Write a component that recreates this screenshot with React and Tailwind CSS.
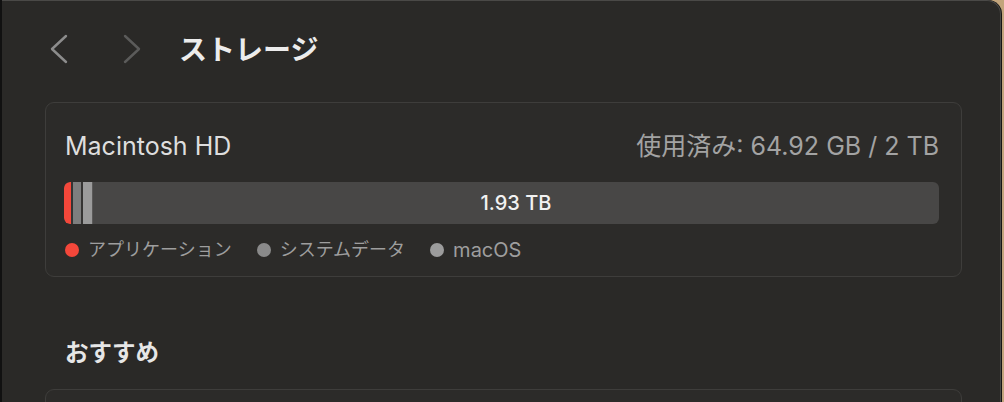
import React from "react";

const font = { fontFamily: '"Inter", "Noto Sans CJK JP", sans-serif' };

function Chevron({ dir, color }) {
	const points = dir === "left" ? "16,2 2,15 16,28" : "2,2 16,15 2,28";
	return (
		<svg width="18" height="30" viewBox="0 0 18 30" fill="none">
			<polyline
				points={points}
				stroke={color}
				strokeWidth="2.4"
				strokeLinecap="round"
				strokeLinejoin="round"
			/>
		</svg>
	);
}

function LegendItem({ color, label, size = "text-[18px]" }) {
	return (
		<div className="flex items-center">
			<span className={`shrink-0 w-[14px] h-[14px] rounded-full ${color}`} />
			<span className={`ml-[9px] ${size} leading-[22px] text-[#9e9e9e]`}>
				{label}
			</span>
		</div>
	);
}

export default function App() {
	return (
		<div
			className="flex w-[1004px] h-[402px] bg-[#c2a47c] overflow-hidden"
			style={font}
		>
			{/* sidebar edge */}
			<div className="w-[2px] bg-[#111111]" />

			{/* window */}
			<div className="w-[999px] h-full bg-[#2a2927] rounded-tr-[14px] border-r border-t border-[#4a4947] shadow-[1px_0_0_#151515] pl-[43px] pr-[38px]">
				{/* header */}
				<div className="flex items-center h-[98px]">
					<div className="ml-[5px] pb-[2px]">
						<Chevron dir="left" color="#8c8c8c" />
					</div>
					<div className="ml-[55px] pb-[2px]">
						<Chevron dir="right" color="#5b5b5a" />
					</div>
					<h1 className="ml-[38px] text-[28px] leading-[32px] font-bold text-[#ececec]">
						ストレージ
					</h1>
				</div>

				{/* storage card */}
				<div className="mt-[3px] rounded-[9px] border border-[#3e3d3b] bg-[#2c2b29] pl-[18px] pr-[22px] pt-[30px] pb-[15px]">
					<div className="flex items-center justify-between leading-[26px] text-[25px]">
						<span className="ml-[1px] text-[#dedede]">Macintosh HD</span>
						<span className="text-[#a3a3a3]">使用済み: 64.92 GB / 2 TB</span>
					</div>

					<div className="mt-[23px] flex h-[42px] rounded-[6px] overflow-hidden bg-[#484746]">
						<div className="w-[7px] bg-[#f4473a] rounded-l-[6px]" />
						<div className="w-[2px] bg-[#353433]" />
						<div className="w-[8px] bg-[#7e7e7e]" />
						<div className="w-[2px] bg-[#353433]" />
						<div className="w-[9px] bg-[#9b9b9b]" />
						<div className="w-[1px] bg-[#5a5958]" />
						<div className="flex-1 flex items-center justify-center text-[20px] font-medium text-[#f2f2f2]">
							1.93 TB
						</div>
					</div>

					<div className="mt-[15px] flex items-center gap-[25px] pl-[1px]">
						<LegendItem color="bg-[#f4473a]" label="アプリケーション" />
						<LegendItem color="bg-[#8a8a8a]" label="システムデータ" />
						<LegendItem color="bg-[#9c9c9c]" label="macOS" size="text-[20px]" />
					</div>
				</div>

				{/* recommendations */}
				<h2 className="mt-[62px] ml-[20px] text-[23.5px] leading-[28px] font-bold text-[#e6e6e6]">
					おすすめ
				</h2>
				<div className="mt-[22px] h-[60px] rounded-[9px] border border-[#3e3d3b] bg-[#2c2b29]" />
			</div>
		</div>
	);
}
